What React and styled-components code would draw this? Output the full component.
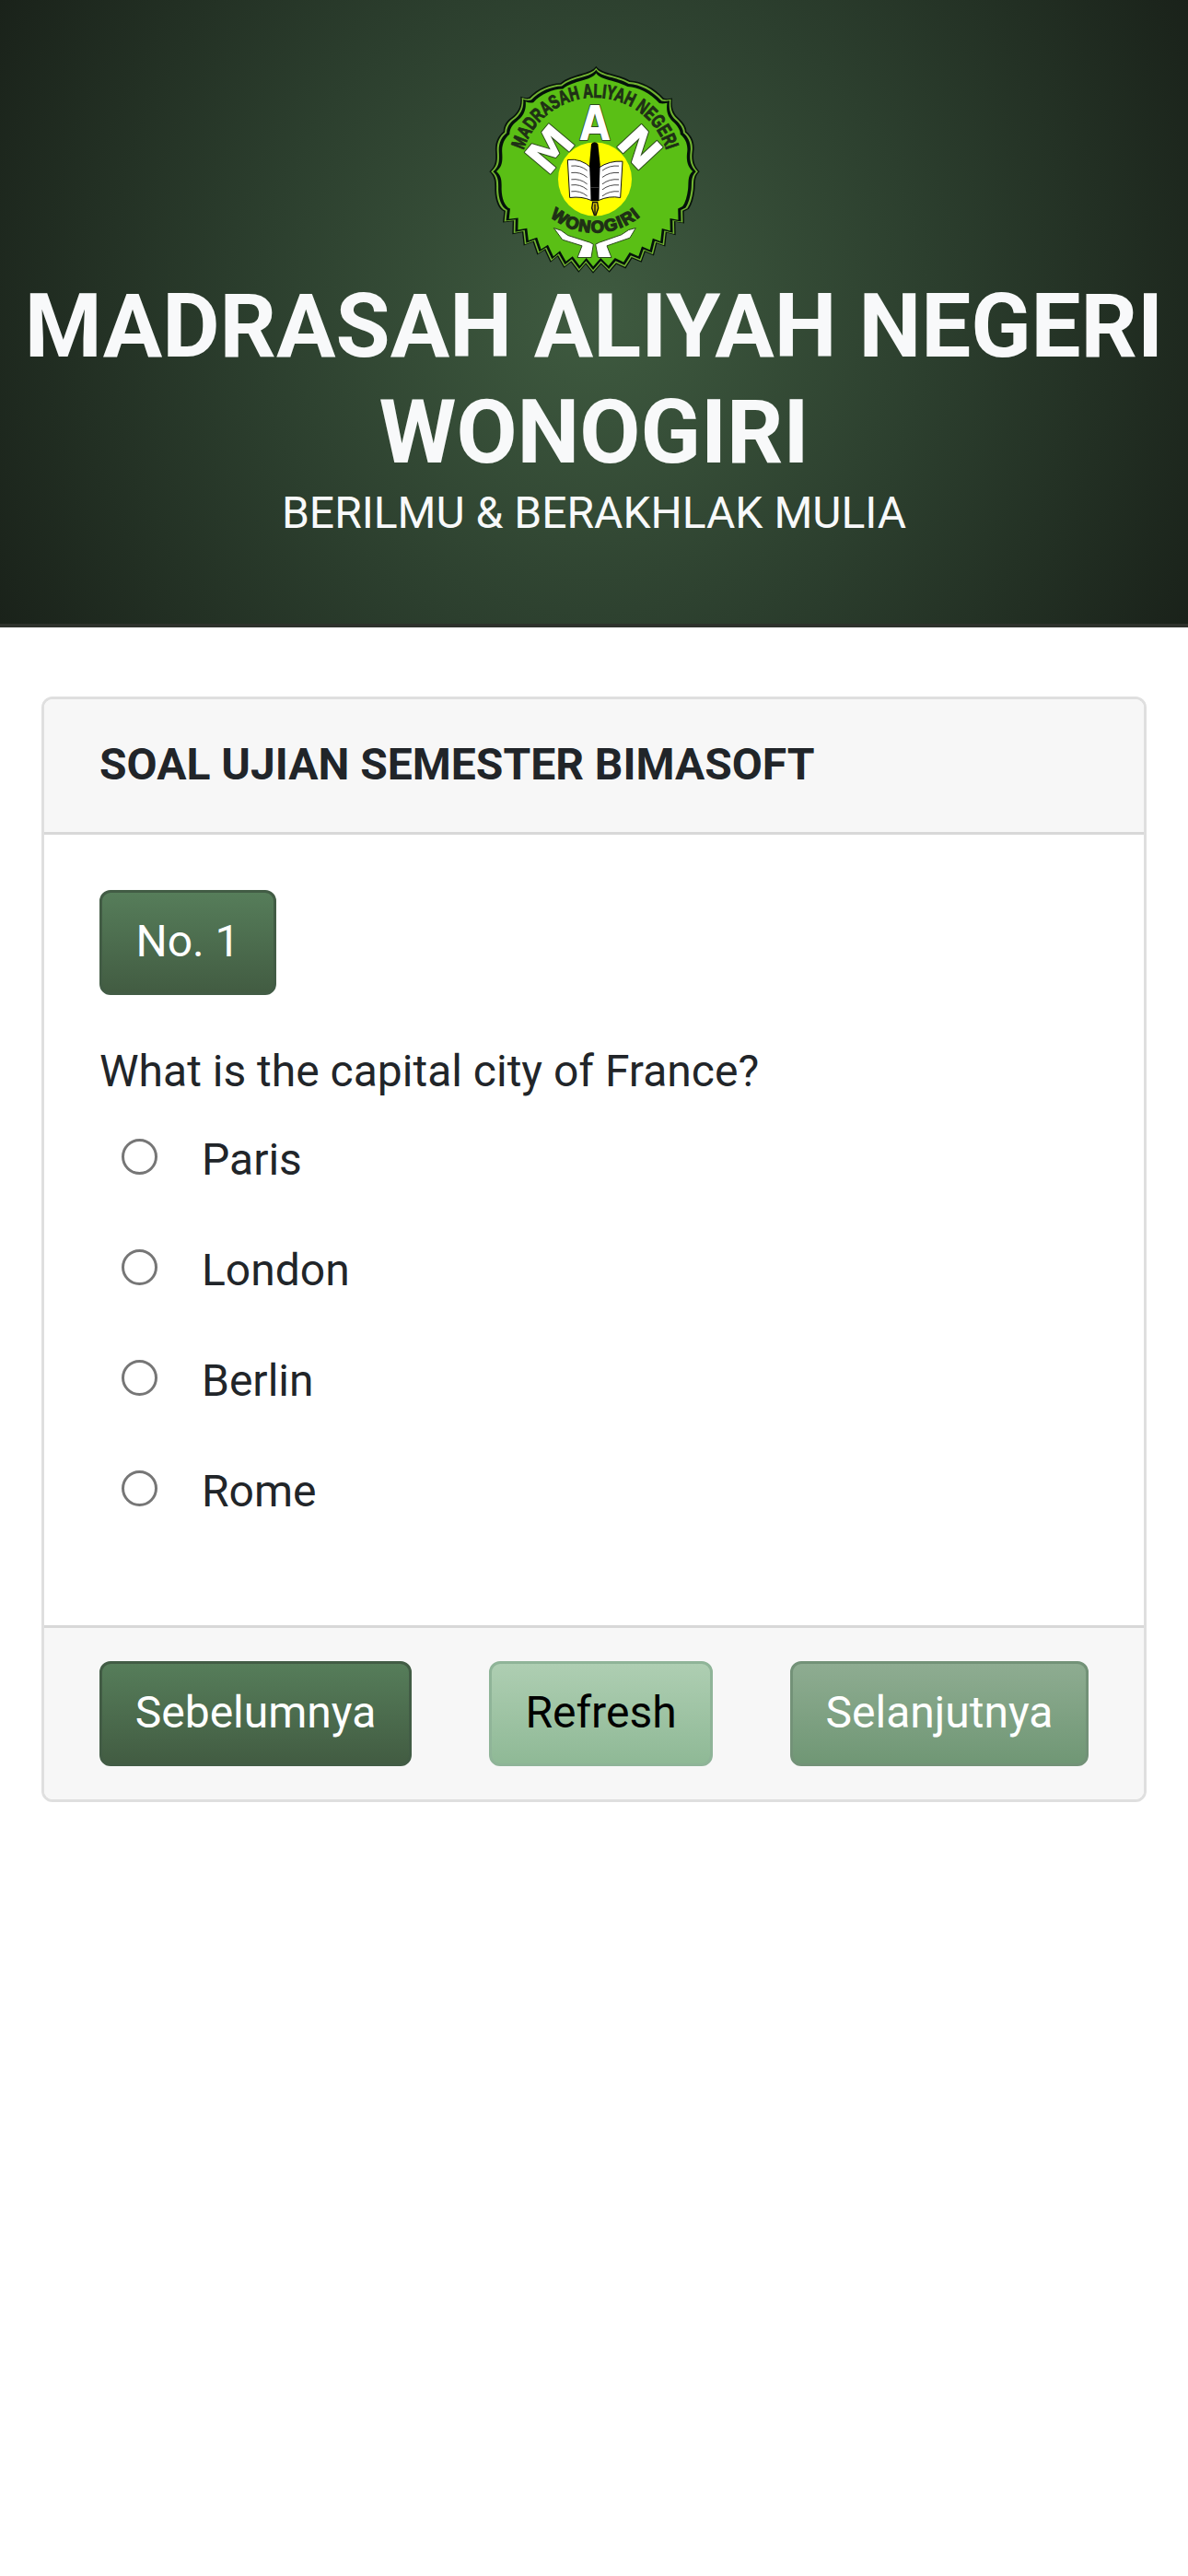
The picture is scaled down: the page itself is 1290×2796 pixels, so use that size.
import React, { useState } from 'react';
import styled, { createGlobalStyle } from 'styled-components';

const GlobalStyle = createGlobalStyle`
  *, *::before, *::after { box-sizing: border-box; }
  body {
    margin: 0;
    background: #fff;
    color: #212529;
    font-family: Roboto, "Liberation Sans", sans-serif;
    font-size: 48px;
    line-height: 69px;
  }
`;

const Hero = styled.header`
  display: flex;
  flex-direction: column;
  align-items: center;
  height: 681px;
  padding-top: 72px;
  border-bottom: 4px solid #2e322c;
  background: radial-gradient(circle at center, #3f5b40 0%, #2c3f2e 50%, #1a221a 100%);
  color: #f8f9fa;
  text-align: center;
`;

const Logo = styled.svg`
  display: block;
  width: 227px;
  height: 225px;
  flex: none;
  overflow: visible;
`;

const SchoolName = styled.h1`
  margin: 0;
  font-size: 96px;
  font-weight: 700;
  line-height: 1.2;
  white-space: nowrap;
`;

const Motto = styled.p`
  margin: 1px 0 0;
  line-height: 1.2;
`;

const Main = styled.main`
  padding: 75px 45px 0;
`;

const Card = styled.section`
  border: 3px solid #dfdfdf;
  border-radius: 12px;
  background: #fff;
  overflow: hidden;
`;

const CardHeader = styled.h2`
  margin: 0;
  padding: 36px 60px 39px;
  border-bottom: 3px solid #d8d8d8;
  background: #f7f7f7;
  font-size: 48px;
  font-weight: 700;
`;

const CardBody = styled.div`
  padding: 60px 60px 84px;
`;

const CardFooter = styled.footer`
  display: flex;
  justify-content: space-between;
  padding: 36px 60px;
  border-top: 3px solid #d8d8d8;
  background: #f7f7f7;
`;

const palette = {
  primary: { from: '#567d5a', to: '#425c42', edge: '#425c45', text: '#fff' },
  light: { from: '#aeceb2', to: '#8fb996', edge: '#8fb498', text: '#000' },
  muted: { from: '#8eac91', to: '#709775', edge: '#739278', text: '#fff' },
};

const Button = styled.button`
  display: block;
  width: ${(p) => p.$width}px;
  margin: 0;
  padding: 18px 0 21px;
  border: 3px solid ${(p) => palette[p.$tone].edge};
  border-radius: 12px;
  background: linear-gradient(180deg, ${(p) => palette[p.$tone].from}, ${(p) => palette[p.$tone].to});
  color: ${(p) => palette[p.$tone].text};
  font: inherit;
  text-align: center;
  white-space: nowrap;
`;

const Question = styled.p`
  margin: 48px 0 3px;
`;

const Option = styled.label`
  display: flex;
  align-items: flex-start;
  gap: 48px;
  height: 120px;
  padding: 24px 0 0 24px;
`;

const Radio = styled.input`
  appearance: none;
  flex: none;
  width: 39px;
  height: 39px;
  margin: 12px 0 0;
  border: 3px solid #767676;
  border-radius: 50%;
  background: #fff;

  &:checked {
    box-shadow: inset 0 0 0 6px #fff, inset 0 0 0 20px #425c42;
  }
`;

const RIM =
  'M382,35 C398,60 450,58 492,82 C530,84 570,104 603,140 Q615,143 630,139 C626,172 634,190 655,208 C672,225 677,240 676,248 ' +
  'C694,262 704,285 700,312 C696,345 704,362 719,378 C700,395 706,420 703,440 Q698,480 684,500 L668,508 ' +
  'L669,547 L640,542 L641,585 L612,577 L607,622 L580,612 L570,652 L542,640 L530,674 L499,661 L478,694 L448,680 L425,707 L398,680 ' +
  'L372,710 L348,680 L325,707 L300,674 L277,692 L256,655 L233,674 L214,634 L190,649 L176,608 L146,619 L141,576 L109,582 L110,540 ' +
  'L78,544 L82,508 C62,500 53,470 52,440 C52,415 54,395 34,378 C54,362 56,345 54,312 C52,285 62,262 80,248 ' +
  'C80,232 88,215 105,203 C127,187 139,165 136,134 Q150,141 163,137 C190,107 230,91 266,90 C305,58 365,62 382,35 Z';

const rings = [
  { scale: 1, fill: '#07130a' },
  { scale: 0.984, fill: '#72b332' },
  { scale: 0.965, fill: '#04120a' },
  { scale: 0.933, fill: '#5abf15' },
];

function SchoolLogo() {
  return (
    <Logo viewBox="36 36 681 674" role="img" aria-label="Logo">
      <defs>
        <path id="arc-top" d="M135,380 A243,243 0 0 1 621,380" />
        <path id="arc-bottom" d="M147,346 A231,231 0 0 0 609,346" />
      </defs>
      {rings.map((r) => (
        <path
          key={r.scale}
          d={RIM}
          fill={r.fill}
          transform={`translate(378 375) scale(${r.scale}) translate(-378 -375)`}
        />
      ))}

      <g fontFamily="Liberation Sans, sans-serif" fontWeight="700" textAnchor="middle" fill="#1f3016" stroke="#1f3016">
        <text fontSize="63" strokeWidth="3" textLength="618" lengthAdjust="spacingAndGlyphs">
          <textPath href="#arc-top" startOffset="50%" textLength="618" lengthAdjust="spacingAndGlyphs">
            MADRASAH ALIYAH NEGERI
          </textPath>
        </text>
        <text fontSize="55" strokeWidth="4" letterSpacing="4">
          <textPath href="#arc-bottom" startOffset="50.4%">WONOGIRI</textPath>
        </text>
      </g>
      <g
        fontFamily="DejaVu Sans, sans-serif"
        fontWeight="700"
        textAnchor="middle"
        fill="#fff"
        stroke="#2c4a1c"
        strokeWidth="6"
        paintOrder="stroke"
        strokeLinejoin="round"
      >
        <text fontSize="150" transform="translate(272 339) rotate(-50)">M</text>
        <text fontSize="152" transform="translate(378 276) scale(0.84 1)">A</text>
        <text fontSize="148" transform="translate(485 335) rotate(47) scale(1.05 1)">N</text>
      </g>

      <circle cx="378" cy="403" r="120" fill="#ff0" />
      <g fill="#fff" stroke="#111" strokeWidth="3" strokeLinejoin="round">
        <path d="M289,340 Q332,334 366,366 L366,472 Q335,458 296,463 Z" />
        <path d="M390,366 Q425,342 468,345 L461,463 Q425,456 390,472 Z" />
      </g>
      <g fill="none" stroke="#222" strokeWidth="2.5">
        {[360, 382, 404, 422, 443].map((y) => (
          <path key={y} d={`M301,${y} Q330,${y - 4} 353,${y + 15} M402,${y + 15} Q425,${y - 3} 456,${y}`} />
        ))}
      </g>
      <path d="M366,288 Q377,277 388,288 L395,355 L390,474 L366,474 L360,355 Z" fill="#000" />
      <path d="M364,430 H391" stroke="#555" strokeWidth="2" />
      <path d="M371,478 H386 L389,497 L381,520 H376 L368,497 Z" fill="#d6bf00" stroke="#111" strokeWidth="4" />
      <path d="M378,484 V518" stroke="#111" strokeWidth="4" />
      <g fill="#fff" stroke="#2c4a1c" strokeWidth="3" strokeLinejoin="round">
        <path d="M244,562 L268,570 L290,586 L362,609 L373,615 L366,658 L321,658 L336,620 L272,600 Z" />
        <path d="M511,562 L488,568 L464,584 L392,609 L380,615 L388,658 L432,658 L417,620 L492,594 Z" />
      </g>
    </Logo>
  );
}

const options = ['Paris', 'London', 'Berlin', 'Rome'];

export default function App() {
  const [answer, setAnswer] = useState(null);

  return (
    <>
      <GlobalStyle />
      <Hero>
        <SchoolLogo />
        <SchoolName>
          MADRASAH ALIYAH NEGERI
          <br />
          WONOGIRI
        </SchoolName>
        <Motto>BERILMU &amp; BERAKHLAK MULIA</Motto>
      </Hero>
      <Main>
        <Card>
          <CardHeader>SOAL UJIAN SEMESTER BIMASOFT</CardHeader>
          <CardBody>
            <Button $tone="primary" $width={192}>No. 1</Button>
            <Question>What is the capital city of France?</Question>
            {options.map((name) => (
              <Option key={name}>
                <Radio type="radio" name="answer" checked={answer === name} onChange={() => setAnswer(name)} />
                {name}
              </Option>
            ))}
          </CardBody>
          <CardFooter>
            <Button $tone="primary" $width={339}>Sebelumnya</Button>
            <Button $tone="light" $width={243} onClick={() => setAnswer(null)}>Refresh</Button>
            <Button $tone="muted" $width={324}>Selanjutnya</Button>
          </CardFooter>
        </Card>
      </Main>
    </>
  );
}
